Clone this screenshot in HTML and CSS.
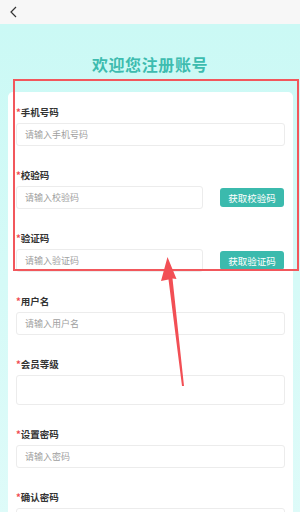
FILE: index.html
```html
<!DOCTYPE html>
<html lang="zh-CN">
<head>
    <meta charset="UTF-8">
    <meta name="viewport" content="width=device-width, initial-scale=1.0">
    <title>注册账号</title>
    <link rel="stylesheet" href="styles.css">
</head>
<body>
    <div class="topbar">
        <svg class="back" width="10" height="14" viewBox="0 0 10 14">
            <polyline points="7,2 2,7 7,12" fill="none" stroke="#333" stroke-width="1.2"/>
        </svg>
    </div>

    <div class="page">
        <h1 class="title">欢迎您注册账号</h1>

        <div class="card">
            <div class="field">
                <label><span class="req">*</span>手机号码</label>
                <div class="input">请输入手机号码</div>
            </div>
            <div class="field">
                <label><span class="req">*</span>校验码</label>
                <div class="row">
                    <div class="input">请输入校验码</div>
                    <button class="get-btn">获取校验码</button>
                </div>
            </div>
            <div class="field">
                <label><span class="req">*</span>验证码</label>
                <div class="row">
                    <div class="input">请输入验证码</div>
                    <button class="get-btn">获取验证码</button>
                </div>
            </div>
            <div class="field">
                <label><span class="req">*</span>用户名</label>
                <div class="input">请输入用户名</div>
            </div>
            <div class="field">
                <label><span class="req">*</span>会员等级</label>
                <div class="input select"></div>
            </div>
            <div class="field">
                <label><span class="req">*</span>设置密码</label>
                <div class="input">请输入密码</div>
            </div>
            <div class="field">
                <label><span class="req">*</span>确认密码</label>
                <div class="input"></div>
            </div>
        </div>
    </div>

    <!-- annotation overlay -->
    <div class="mark-box"></div>
    <svg class="mark-arrow" width="300" height="512" viewBox="0 0 300 512">
        <polygon points="167.5,257 176.5,279 172.5,278.5 184,386 182,386 168.5,279.5 161,281" fill="#f24f55"/>
    </svg>
</body>
</html>
```

FILE: styles.css
```css
body {
    margin: 0;
    width: 300px;
    height: 512px;
    overflow: hidden;
    position: relative;
    font-family: "Noto Sans CJK SC", "Noto Sans", sans-serif;
    background: #dcfaf8;
}
.topbar {
    height: 24px;
    background-color: #f7f7f7;
    display: flex;
    align-items: center;
    padding-left: 9px;
}
.back {
    display: block;
}
.page {
    background: linear-gradient(#cbf9f5, #dffbf9);
    min-height: 488px;
    padding-top: 29px;
}
.title {
    margin: 0 0 17px;
    text-align: center;
    font-size: 16px;
    line-height: 22px;
    font-weight: bold;
    color: #3dbcaf;
    letter-spacing: 0.6px;
}
.card {
    background: white;
    margin: 0 7px 0 8px;
    border-radius: 5px 5px 0 0;
    padding: 14px 8px 0 8px;
}
.field {
    display: flex;
    flex-direction: column;
    margin-bottom: 23px;
}
.field label {
    font-size: 9.5px;
    line-height: 13px;
    font-weight: bold;
    color: #333;
    margin-bottom: 4px;
}
.req {
    color: #f0494f;
}
.row {
    display: flex;
    align-items: center;
    gap: 17px;
}
.row .input {
    flex: 1;
}
.input {
    height: 23px;
    box-sizing: border-box;
    border: 1px solid #ececec;
    border-radius: 3px;
    padding-left: 8px;
    font-size: 9px;
    line-height: 21px;
    color: #a0a0a0;
}
.input.select {
    height: 30px;
}
.get-btn {
    width: 64px;
    height: 19px;
    margin-right: 1px;
    padding: 0;
    border: none;
    border-radius: 3px;
    background-color: #3bbaad;
    color: white;
    font-family: inherit;
    font-size: 9.5px;
}
.mark-box {
    position: absolute;
    left: 13px;
    top: 79px;
    width: 282px;
    height: 188px;
    border: 2px solid #f2575c;
}
.mark-arrow {
    position: absolute;
    left: 0;
    top: 0;
}
```
